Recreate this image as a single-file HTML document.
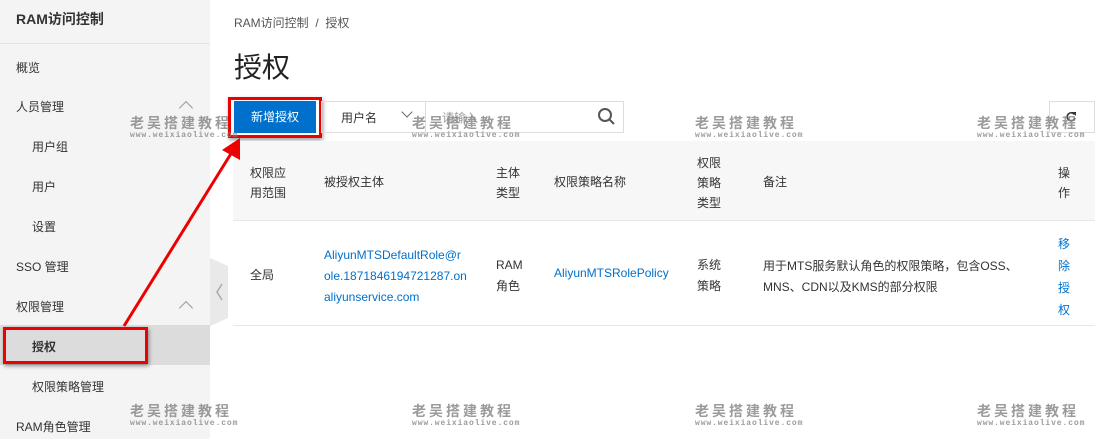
<!DOCTYPE html>
<html><head><meta charset="utf-8"><style>
*{margin:0;padding:0;box-sizing:border-box}
body{width:1118px;height:439px;overflow:hidden;background:#fff;font-family:"Liberation Sans","Noto Sans CJK SC",sans-serif;color:#333;font-size:12px;position:relative}
.a{position:absolute;white-space:nowrap}
.side{position:absolute;left:0;top:0;width:210px;height:439px;background:#f4f4f4}
.si{position:absolute;left:16px;font-size:12px;color:#333;line-height:16px}
.sub{left:32px}
.car{position:absolute;left:181px;width:10px;height:10px;border-left:1.5px solid #999;border-top:1.5px solid #999;transform:rotate(45deg)}
.wm{position:absolute;color:#8a8a8a;opacity:.85;text-align:left;width:110px;white-space:nowrap}
.wm b{display:block;font-size:14px;letter-spacing:3px;font-weight:bold;line-height:16px}
.wm i{display:block;font-style:normal;font-size:8px;letter-spacing:.9px;font-weight:bold;line-height:10px;font-family:"Liberation Mono",monospace}
.link{color:#0070cc}
</style></head><body>
<div class="side">
<div class="si" style="top:11px;font-size:14px;font-weight:bold;color:#333">RAM访问控制</div>
<div style="position:absolute;left:0;top:43px;width:210px;height:1px;background:#e4e4e4"></div>
<div class="si" style="top:60px">概览</div>
<div class="si" style="top:99px">人员管理</div><div class="car" style="top:103px"></div>
<div class="si sub" style="top:139px">用户组</div>
<div class="si sub" style="top:179px">用户</div>
<div class="si sub" style="top:219px">设置</div>
<div class="si" style="top:259px">SSO 管理</div>
<div class="si" style="top:299px">权限管理</div><div class="car" style="top:303px"></div>
<div style="position:absolute;left:0;top:325px;width:210px;height:40px;background:#dcdcdc"></div>
<div class="si sub" style="top:339px;font-weight:bold">授权</div>
<div class="si sub" style="top:379px">权限策略管理</div>
<div class="si" style="top:419px">RAM角色管理</div>
</div>
<svg class="a" style="left:210px;top:258px" width="20" height="68"><polygon points="0,0 18,8 18,60 0,68" fill="#e9e9e9"/><polyline points="12,26 7,34 12,42" fill="none" stroke="#aaa" stroke-width="1.5"/></svg>
<div class="a" style="left:234px;top:14px;color:#555">RAM访问控制 &nbsp;/&nbsp; 授权</div>
<div class="a" style="left:234px;top:50px;font-size:28px;color:#222;line-height:36px">授权</div>
<div class="a" style="left:228px;top:97px;width:94px;height:41px;border:3px solid #e00;box-shadow:1px 2px 4px rgba(0,0,0,.4)"></div>
<div class="a" style="left:234px;top:101px;width:82px;height:32px;background:#0070cc;color:#fff;text-align:center;line-height:32px">新增授权</div>
<div class="a" style="left:321px;top:101px;width:105px;height:32px;border:1px solid #ddd"></div>
<div class="a" style="left:341px;top:109px">用户名</div>
<div class="a" style="left:403px;top:108px;width:8px;height:8px;border-right:1.3px solid #666;border-bottom:1.3px solid #666;transform:rotate(45deg)"></div>
<div class="a" style="left:425px;top:101px;width:199px;height:32px;border:1px solid #ddd"></div>
<div class="a" style="left:442px;top:109px;color:#999">请输入</div>
<svg class="a" style="left:597px;top:107px" width="20" height="20"><circle cx="8" cy="8" r="6" fill="none" stroke="#555" stroke-width="2"/><line x1="12.5" y1="12.5" x2="17" y2="17" stroke="#555" stroke-width="2"/></svg>
<div class="a" style="left:1049px;top:101px;width:46px;height:32px;border:1px solid #ddd"></div>
<svg class="a" style="left:1065px;top:111px" width="12" height="12"><path d="M9.5 3.5A4 4 0 1 0 10 7" fill="none" stroke="#333" stroke-width="1.6"/><polygon points="7,1 11,1 11,5" fill="#333"/></svg>
<div class="a" style="left:233px;top:141px;width:862px;height:80px;background:#f7f7f7;border-bottom:1px solid #e8e8e8"></div>
<div class="a" style="left:250px;top:163px;line-height:20px">权限应<br>用范围</div>
<div class="a" style="left:324px;top:173px">被授权主体</div>
<div class="a" style="left:496px;top:163px;line-height:20px">主体<br>类型</div>
<div class="a" style="left:554px;top:173px">权限策略名称</div>
<div class="a" style="left:697px;top:153px;line-height:20px">权限<br>策略<br>类型</div>
<div class="a" style="left:763px;top:173px">备注</div>
<div class="a" style="left:1058px;top:163px;line-height:20px">操<br>作</div>
<div class="a" style="left:233px;top:325px;width:862px;height:1px;background:#e8e8e8"></div>
<div class="a" style="left:250px;top:266px">全局</div>
<div class="a link" style="left:324px;top:245px;line-height:21px">AliyunMTSDefaultRole@r<br>ole.1871846194721287.on<br>aliyunservice.com</div>
<div class="a" style="left:496px;top:255px;line-height:21px">RAM<br>角色</div>
<div class="a link" style="left:554px;top:266px">AliyunMTSRolePolicy</div>
<div class="a" style="left:697px;top:255px;line-height:21px">系统<br>策略</div>
<div class="a" style="left:763px;top:256px;line-height:21px">用于MTS服务默认角色的权限策略，包含OSS、<br>MNS、CDN以及KMS的部分权限</div>
<div class="a link" style="left:1058px;top:233px;line-height:22px">移<br>除<br>授<br>权</div>
<div class="a" style="left:3px;top:327px;width:145px;height:37px;border:3px solid #e00;box-shadow:1px 2px 4px rgba(0,0,0,.4)"></div>
<svg class="a" style="left:0;top:0" width="300" height="340"><line x1="124" y1="326" x2="232" y2="152" stroke="#e00" stroke-width="3"/><polygon points="240,138 240,160 222,150" fill="#e00"/></svg>
<div class="wm" style="left:130px;top:115px"><b>老吴搭建教程</b><i>www.weixiaolive.com</i></div>
<div class="wm" style="left:412px;top:115px"><b>老吴搭建教程</b><i>www.weixiaolive.com</i></div>
<div class="wm" style="left:695px;top:115px"><b>老吴搭建教程</b><i>www.weixiaolive.com</i></div>
<div class="wm" style="left:977px;top:115px"><b>老吴搭建教程</b><i>www.weixiaolive.com</i></div>
<div class="wm" style="left:130px;top:403px"><b>老吴搭建教程</b><i>www.weixiaolive.com</i></div>
<div class="wm" style="left:412px;top:403px"><b>老吴搭建教程</b><i>www.weixiaolive.com</i></div>
<div class="wm" style="left:695px;top:403px"><b>老吴搭建教程</b><i>www.weixiaolive.com</i></div>
<div class="wm" style="left:977px;top:403px"><b>老吴搭建教程</b><i>www.weixiaolive.com</i></div>
</body></html>
